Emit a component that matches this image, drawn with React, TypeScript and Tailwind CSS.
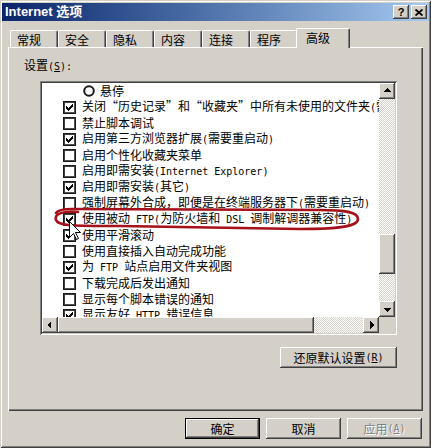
import React from 'react';

type Item = { kind: 'check' | 'radio'; checked: boolean; label: string };

const items: Item[] = [
  { kind: 'radio', checked: false, label: '悬停' },
  { kind: 'check', checked: true, label: '关闭“历史记录”和“收藏夹”中所有未使用的文件夹(需要重启动)' },
  { kind: 'check', checked: false, label: '禁止脚本调试' },
  { kind: 'check', checked: true, label: '启用第三方浏览器扩展(需要重启动)' },
  { kind: 'check', checked: false, label: '启用个性化收藏夹菜单' },
  { kind: 'check', checked: false, label: '启用即需安装(Internet Explorer)' },
  { kind: 'check', checked: true, label: '启用即需安装(其它)' },
  { kind: 'check', checked: false, label: '强制屏幕外合成，即便是在终端服务器下(需要重启动)' },
  { kind: 'check', checked: true, label: '使用被动 FTP(为防火墙和 DSL 调制解调器兼容性)' },
  { kind: 'check', checked: true, label: '使用平滑滚动' },
  { kind: 'check', checked: false, label: '使用直接插入自动完成功能' },
  { kind: 'check', checked: true, label: '为 FTP 站点启用文件夹视图' },
  { kind: 'check', checked: false, label: '下载完成后发出通知' },
  { kind: 'check', checked: false, label: '显示每个脚本错误的通知' },
  { kind: 'check', checked: true, label: '显示友好 HTTP 错误信息' },
];

const tabs = ['常规', '安全', '隐私', '内容', '连接', '程序'];

const raised =
  'bg-[#d4d0c8] shadow-[inset_-1px_-1px_#404040,inset_1px_1px_#fff,inset_-2px_-2px_#808080,inset_2px_2px_#d4d0c8]';
const sunken =
  'shadow-[inset_1px_1px_#808080,inset_-1px_-1px_#fff,inset_2px_2px_#404040,inset_-2px_-2px_#d4d0c8]';
const track = 'bg-[repeating-conic-gradient(#d4d0c8_0_25%,#ffffff_0_50%)] bg-[length:2px_2px]';

// SimSun style: latin half width, quotes full width
function Label({ text }: { text: string }) {
  const parts = text.match(/[\x20-\x7e]+|[“”]|[^\x20-\x7e“”]+/g) ?? [];
  return (
    <span className="whitespace-pre">
      {parts.map((p, i) =>
        /^[\x20-\x7e]/.test(p) ? (
          <span key={i} className="font-['DejaVu_Sans_Mono'] text-[10px]">
            {p}
          </span>
        ) : p === '“' ? (
          <span key={i} className="inline-block w-[12px] text-right">
            {p}
          </span>
        ) : p === '”' ? (
          <span key={i} className="inline-block w-[12px] text-left">
            {p}
          </span>
        ) : (
          <span key={i}>{p}</span>
        )
      )}
    </span>
  );
}

function CheckBox({ checked }: { checked: boolean }) {
  return (
    <span className="relative w-[13px] h-[13px] shrink-0 bg-white border border-[#1a1a1a] shadow-[inset_1px_1px_#404040,inset_-1px_-1px_#505050]">
      {checked && (
        <svg width="7" height="7" viewBox="0 0 7 7" className="absolute left-[2px] top-[2px]" shapeRendering="crispEdges">
          <path
            d="M6 0h1v1h-1z M5 1h2v1h-2z M0 2h1v1h-1z M4 2h3v1h-3z M0 3h2v1h-2z M3 3h3v1h-3z M0 4h5v1h-5z M1 5h3v1h-3z M2 6h1v1h-1z"
            fill="#000"
          />
        </svg>
      )}
    </span>
  );
}

function Radio() {
  return (
    <svg width="12" height="12" viewBox="0 0 12 12" className="shrink-0">
      <circle cx="6" cy="6" r="4.8" fill="#fff" stroke="#1a1a1a" strokeWidth="2" />
    </svg>
  );
}

function Arrow({ dir }: { dir: 'up' | 'down' | 'left' | 'right' }) {
  const d = {
    up: 'M2 7 L10 7 L6 3 Z',
    down: 'M2 5 L10 5 L6 9 Z',
    left: 'M7 2 L7 10 L3 6 Z',
    right: 'M5 2 L5 10 L9 6 Z',
  }[dir];
  return (
    <div className={`w-[16px] h-[16px] shrink-0 flex items-center justify-center ${raised}`}>
      <svg width="12" height="12" viewBox="0 0 12 12" shapeRendering="crispEdges">
        <path d={d} fill="#000" />
      </svg>
    </div>
  );
}

function Button({ children, isDefault, disabled }: { children: React.ReactNode; isDefault?: boolean; disabled?: boolean }) {
  return (
    <div
      className={`w-[75px] h-[21px] flex items-center justify-center ${
        isDefault ? 'border border-black' : ''
      } ${raised} ${disabled ? 'text-[#808080] [text-shadow:1px_1px_0_#fff]' : ''}`}
    >
      {children}
    </div>
  );
}

export default function App() {
  return (
    <div className="relative w-[431px] h-[448px] bg-[#d4d0c8] shadow-[inset_1px_1px_#d4d0c8,inset_-1px_-1px_#404040,inset_2px_2px_#fff,inset_-2px_-2px_#808080] pt-[3px] px-[2px] pb-[2px] text-[12px] leading-[16px] text-black font-['Noto_Sans_CJK_SC']">
      {/* Title bar */}
      <div className="h-[18px] flex items-center justify-between pl-[3px] pr-[2px] bg-linear-to-r from-[#0a246a] to-[#a6caf0]">
        <span className="text-white font-bold text-[13px] font-['Liberation_Sans','Noto_Sans_CJK_SC']">Internet 选项</span>
        <div className="flex gap-[2px]">
          <div className={`w-[16px] h-[14px] flex items-center justify-center ${raised}`}>
            <span className="font-['Liberation_Sans'] font-bold text-[11px] leading-[11px]">?</span>
          </div>
          <div className={`w-[16px] h-[14px] flex items-center justify-center ${raised}`}>
            <svg width="8" height="7" viewBox="0 0 8 7">
              <path d="M0.5 0.5 L7.5 6.5 M7.5 0.5 L0.5 6.5" stroke="#000" strokeWidth="1.8" />
            </svg>
          </div>
        </div>
      </div>

      <div className="px-[6px]">
        {/* Tabs */}
        <div className="relative z-10 mt-[7px] h-[19px] flex items-end pl-[2px]">
          {tabs.map((t) => (
            <div
              key={t}
              className="w-[48px] h-[17px] pl-[6px] pt-[1px] border-l border-t border-white border-r border-r-[#404040] shadow-[inset_-1px_0_#808080] rounded-t-[2px] bg-[#d4d0c8]"
            >
              {t}
            </div>
          ))}
          <div className="relative -ml-[2px] -mb-px w-[54px] h-[20px] pl-[9px] pt-[1px] border-l border-t border-white border-r border-r-[#404040] shadow-[inset_-1px_0_#808080] rounded-t-[2px] bg-[#d4d0c8]">
            高级
          </div>
        </div>

        {/* Panel */}
        <div className="h-[364px] flex flex-col pt-[10px] pl-[16px] shadow-[inset_1px_1px_#fff,inset_-1px_-1px_#404040,inset_-2px_-2px_#808080]">
          <div>
            设置<span className="font-['DejaVu_Sans_Mono'] text-[10px]">(<u>S</u>):</span>
          </div>

          {/* List box */}
          <div className={`mt-[6px] ml-[16px] w-[357px] h-[254px] p-[2px] bg-white ${sunken}`}>
            <div className="flex h-[234px]">
              <div className="flex-1 overflow-hidden">
                {items.map((it, i) => (
                  <div key={i} className="h-[16px] flex items-center whitespace-nowrap">
                    {it.kind === 'radio' ? (
                      <>
                        <span className="ml-[41px]">
                          <Radio />
                        </span>
                        <span className="ml-[5px]">
                          <Label text={it.label} />
                        </span>
                      </>
                    ) : (
                      <>
                        <span className="ml-[21px] flex">
                          <CheckBox checked={it.checked} />
                        </span>
                        <span className="ml-[6px]">
                          <Label text={it.label} />
                        </span>
                      </>
                    )}
                  </div>
                ))}
              </div>
              <div className="w-[16px] flex flex-col">
                <Arrow dir="up" />
                <div className={`flex-1 flex flex-col ${track}`}>
                  <div className="h-[135px]" />
                  <div className={`h-[40px] ${raised}`} />
                </div>
                <Arrow dir="down" />
              </div>
            </div>
            <div className="flex h-[16px]">
              <Arrow dir="left" />
              <div className={`w-[256px] ${raised}`} />
              <div className={`flex-1 ${track}`} />
              <Arrow dir="right" />
              <div className="w-[16px] bg-[#d4d0c8]" />
            </div>
          </div>

          <div className="mt-[12px] ml-[16px] w-[357px] flex justify-end">
            <div className={`w-[117px] h-[21px] flex items-center justify-center ${raised}`}>
              还原默认设置<span className="font-['DejaVu_Sans_Mono'] text-[10px]">(<u>R</u>)</span>
            </div>
          </div>
        </div>

        {/* Dialog buttons */}
        <div className="mt-[7px] flex justify-end gap-[6px] pr-[1px]">
          <Button isDefault>确定</Button>
          <Button>取消</Button>
          <Button disabled>
            应用<span className="font-['DejaVu_Sans_Mono'] text-[10px]">(<u>A</u>)</span>
          </Button>
        </div>
      </div>

      {/* Hand-drawn red mark and mouse pointer over the dialog */}
      <svg className="absolute left-0 top-0 pointer-events-none" width="431" height="448" viewBox="0 0 431 448">
        <path
          d="M78 212 C62 211 54 214 56 220 C58 226 72 226 120 226 L300 229 C342 229 358 226 358 219 C358 212 345 210 320 210 L72 209 C63 209 58 210 56 213"
          fill="none"
          stroke="#a5101a"
          strokeWidth="2.6"
          strokeLinecap="round"
        />
        <path
          d="M69.5 221.5 L69.5 237.5 L73.5 233.5 L76.5 239.5 L78.5 238.5 L75.5 232.5 L80.5 232.5 Z"
          fill="#fff"
          stroke="#000"
          strokeWidth="1"
        />
      </svg>
    </div>
  );
}
